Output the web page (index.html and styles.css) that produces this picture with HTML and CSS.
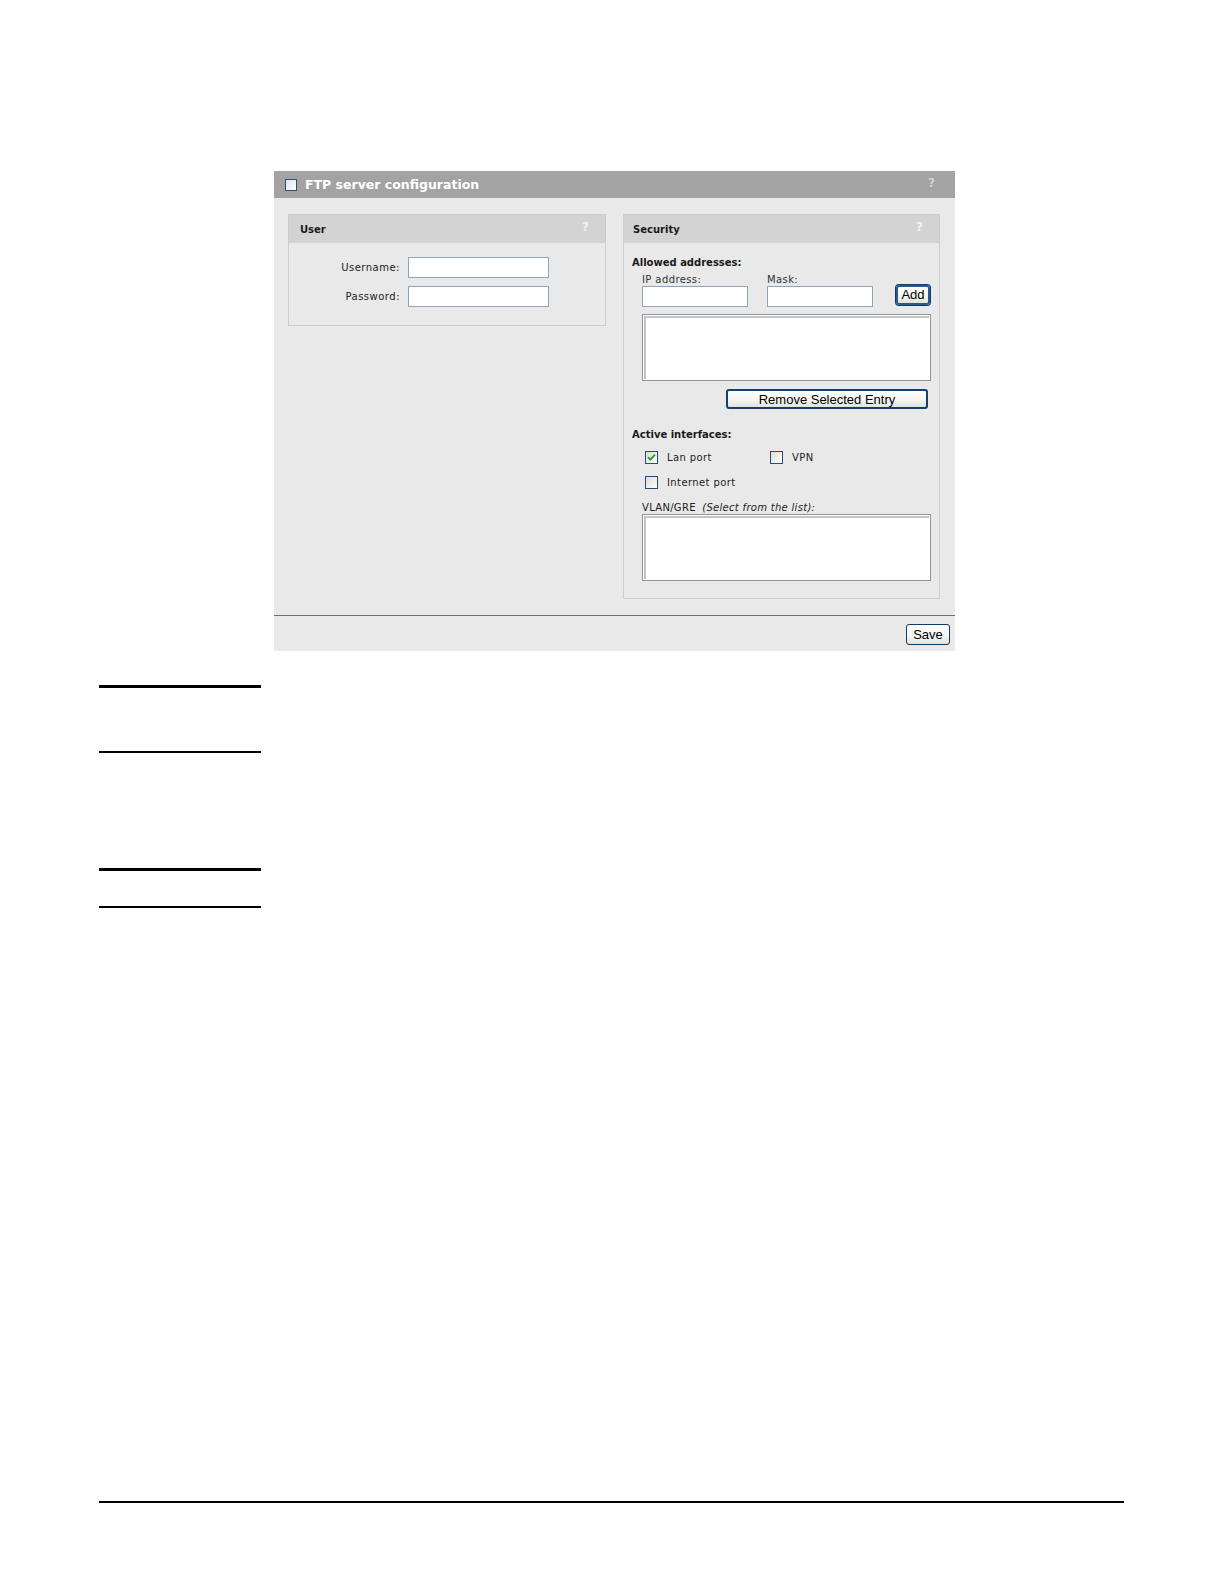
FILE: index.html
```html
<!DOCTYPE html>
<html>
<head>
<meta charset="utf-8">
<title>FTP server configuration</title>
<link rel="stylesheet" href="styles.css">
</head>
<body>
<div class="page">
  <div class="panel">
    <div class="panel-head">
      <span class="cb cb-head"></span>
      <span class="panel-title">FTP server configuration</span>
      <span class="help help-head">?</span>
    </div>
    <div class="panel-body">
      <div class="box box-user">
        <div class="box-head"><span class="box-title">User</span><span class="help">?</span></div>
        <div class="user-body">
          <label class="lbl">Username:</label><span class="input input-user"></span>
          <label class="lbl">Password:</label><span class="input input-user"></span>
        </div>
      </div>
      <div class="box box-sec">
        <div class="box-head"><span class="box-title">Security</span><span class="help">?</span></div>
        <div class="sec-body">
          <div class="sec-title">Allowed addresses:</div>
          <div class="addr-row">
            <div class="field">
              <div class="field-lbl">IP address:</div>
              <span class="input input-addr"></span>
            </div>
            <div class="field">
              <div class="field-lbl">Mask:</div>
              <span class="input input-addr"></span>
            </div>
            <button class="btn btn-add">Add</button>
          </div>
          <div class="listbox"></div>
          <button class="btn btn-remove">Remove Selected Entry</button>
          <div class="sec-title sec-title-ifs">Active interfaces:</div>
          <div class="if-grid">
            <div class="if-item"><span class="cb cb-checked"><svg viewBox="0 0 13 13" width="13" height="13"><path d="M3 6.2 L5.3 8.6 L10 3.6" fill="none" stroke="#21a121" stroke-width="1.8"/></svg></span><span class="if-lbl">Lan port</span></div>
            <div class="if-item"><span class="cb"></span><span class="if-lbl">VPN</span></div>
            <div class="if-item"><span class="cb"></span><span class="if-lbl">Internet port</span></div>
          </div>
          <div class="vlan-lbl">VLAN/GRE <i>(Select from the list):</i></div>
          <div class="listbox listbox-vlan"></div>
        </div>
      </div>
    </div>
    <div class="panel-foot">
      <button class="btn btn-save">Save</button>
    </div>
  </div>
  <div class="rules">
    <div class="rule rule-a"></div>
    <div class="rule rule-b"></div>
    <div class="rule rule-c"></div>
    <div class="rule rule-d"></div>
  </div>
  <div class="footer-rule"></div>
</div>
</body>
</html>
```

FILE: styles.css
```css
html, body {
  margin: 0;
  padding: 0;
  background: #ffffff;
}
.page {
  width: 1224px;
  height: 1584px;
  overflow: hidden;
  font-family: "DejaVu Sans", Verdana, sans-serif;
  font-size: 10px;
  color: #1a1a1a;
}
.panel {
  margin: 171px 0 0 274px;
  width: 681px;
  background: #e9e9e9;
}
.panel-head {
  height: 27px;
  background: #a3a3a3;
  display: flex;
  align-items: center;
  padding: 0 20px 0 11px;
}
.panel-title {
  margin-left: 8px;
  font-weight: bold;
  font-size: 12.5px;
  color: #ffffff;
  flex: 1;
}
.help {
  font-weight: bold;
  font-size: 12px;
  color: #f3f3f3;
}
.help-head {
  color: #d2d2d2;
  margin-top: -4px;
}
.cb {
  display: inline-block;
  box-sizing: border-box;
  width: 13px;
  height: 13px;
  border: 1px solid #1e4f7e;
  background: linear-gradient(135deg, #dcdcd6 0%, #f4f4f1 70%, #ffffff 100%);
  position: relative;
  flex: none;
}
.cb svg {
  position: absolute;
  left: -1px;
  top: -1px;
}
.cb-head {
  width: 12px;
  height: 12px;
  border-color: #2b4f74;
  background: linear-gradient(135deg, #e3e3e3, #ffffff);
}
.panel-body {
  display: flex;
  align-items: flex-start;
  gap: 17px;
  padding: 16px 15px 16px 14px;
  border-bottom: 1px solid #727272;
}
.box {
  border: 1px solid #cdcdcd;
  background: #e9e9e9;
}
.box-user { width: 316px; }
.box-sec { width: 315px; }
.box-head {
  height: 28px;
  background: #d3d3d3;
  display: flex;
  align-items: center;
  justify-content: space-between;
  padding: 0 16px 0 11px;
}
.box-head .help { margin-top: -4px; }
.box-sec .box-head { padding-left: 9px; }
.box-title {
  font-weight: bold;
  font-size: 10px;
  color: #1a1a1a;
}
.user-body {
  display: grid;
  grid-template-columns: 111px 141px;
  column-gap: 8px;
  row-gap: 8px;
  align-items: center;
  padding: 14px 0 18px 0;
}
.lbl {
  text-align: right;
  color: #222;
  letter-spacing: 0.5px;
}
.input {
  display: block;
  box-sizing: border-box;
  height: 21px;
  background: #ffffff;
  border: 1px solid #8fa4bd;
}
.input-user { width: 141px; }
.input-addr { width: 106px; }
.sec-body {
  display: flex;
  flex-direction: column;
  align-items: flex-start;
  padding: 14px 0 17px 8px;
}
.sec-title {
  font-weight: bold;
  line-height: 12px;
}
.addr-row {
  display: flex;
  align-items: flex-end;
  margin: 5px 0 0 10px;
}
.field + .field { margin-left: 19px; }
.field-lbl {
  line-height: 12px;
  color: #333;
  letter-spacing: 0.4px;
}
.btn {
  font-family: "Liberation Sans", Arial, sans-serif;
  font-size: 13px;
  color: #000;
  padding: 0;
  box-sizing: border-box;
  background: linear-gradient(#ffffff 0%, #f4f4f0 60%, #e3e2da 100%);
  border: 1px solid #0f3b68;
  border-radius: 3px;
  cursor: default;
}
.btn-add {
  width: 34px;
  height: 20px;
  margin: 0 0 2px 23px;
  border: 2px solid #2a5a8f;
  box-shadow: 0 0 0 1px #0f3b68;
  line-height: 14px;
}
.listbox {
  box-sizing: border-box;
  width: 289px;
  height: 67px;
  margin: 7px 0 0 10px;
  background: #ffffff;
  border: 1px solid #8d979f;
  box-shadow: inset 0 0 0 1px #fdfdfd, inset 1px 1px 0 2px #c4c4c4;
}
.btn-remove {
  width: 202px;
  height: 20px;
  margin: 8px 0 0 94px;
  border: 2px solid #15406e;
  line-height: 15px;
}
.sec-title-ifs {
  margin-top: 20px;
}
.if-grid {
  display: grid;
  grid-template-columns: 125px auto;
  row-gap: 12px;
  margin: 10px 0 0 13px;
}
.if-item {
  display: flex;
  align-items: center;
  height: 13px;
}
.if-lbl {
  margin-left: 9px;
  letter-spacing: 0.4px;
  color: #222;
}
.vlan-lbl {
  margin: 13px 0 0 10px;
  line-height: 12px;
  color: #222;
  letter-spacing: 0.3px;
}
.vlan-lbl i {
  margin-left: 3px;
}
.listbox-vlan {
  height: 67px;
  margin-top: 0;
}
.panel-foot {
  height: 35px;
  display: flex;
  justify-content: flex-end;
  align-items: flex-start;
  padding-right: 5px;
}
.btn-save {
  width: 44px;
  height: 21px;
  margin-top: 8px;
  line-height: 18px;
}
.rules {
  margin-left: 99px;
  width: 162px;
}
.rule {
  background: #000;
}
.rule-a { margin-top: 34px; height: 3px; }
.rule-b { margin-top: 63px; height: 2px; }
.rule-c { margin-top: 115px; height: 3px; }
.rule-d { margin-top: 35px; height: 2px; }
.footer-rule {
  margin: 593px 0 0 99px;
  width: 1025px;
  height: 2px;
  background: #000;
}
```
